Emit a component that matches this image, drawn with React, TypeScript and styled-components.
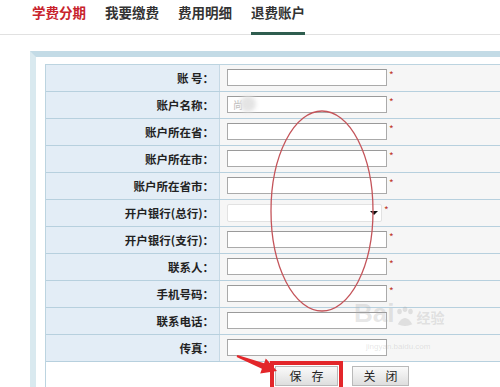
import React from 'react'
import styled, { createGlobalStyle } from 'styled-components'

const GlobalStyle = createGlobalStyle`
  html, body {
    margin: 0;
    padding: 0;
    background: #fff;
    overflow: hidden;
  }
  body {
    font-family: 'Noto Sans CJK SC', 'DejaVu Sans', sans-serif;
    width: 500px;
    height: 387px;
  }
`

const Page = styled.div`
  position: relative;
  width: 500px;
  height: 387px;
  overflow: hidden;
`

const TabBar = styled.div`
  display: flex;
  gap: 19px;
  height: 35px;
  padding-left: 32px;
  border-bottom: 1px solid #e1e1e1;
  box-sizing: border-box;
`

const Tab = styled.div<{ $active?: boolean; $highlight?: boolean }>`
  font-size: 13.5px;
  font-weight: bold;
  line-height: 24px;
  height: 35px;
  box-sizing: border-box;
  color: ${(p) => (p.$highlight ? '#c8232c' : '#333')};
  border-bottom: 3px solid ${(p) => (p.$active ? '#2f5d4f' : 'transparent')};
  margin-bottom: -1px;
`

const Panel = styled.div`
  margin: 16px 0 0 30px;
  border-top: 6px solid #c3dbe6;
  border-left: 6px solid #d9e9ef;
  padding: 7px 0 0 9px;
  background: #fff;
`

const FormTable = styled.div`
  width: 480px;
  border-top: 1px solid #bcd4e0;
  border-left: 1px solid #bcd4e0;
`

const Row = styled.div`
  display: grid;
  grid-template-columns: 174px 1fr;
  height: 27px;
  border-bottom: 1px solid #b7d0de;
  box-sizing: border-box;
`

const Label = styled.div`
  background: #e3edf6;
  border-right: 1px solid #c6d9e5;
  text-align: right;
  padding-right: 5px;
  font-size: 11.5px;
  font-weight: bold;
  color: #222;
  line-height: 26px;
`

const Value = styled.div`
  position: relative;
  display: flex;
  align-items: flex-start;
  background: #f6f6f6;
  padding: 4px 0 0 7px;
`

const TextBox = styled.div<{ $width?: number }>`
  width: ${(p) => p.$width ?? 160}px;
  height: 17px;
  box-sizing: border-box;
  background: #fff;
  border: 1px solid #aaa;
  border-top-color: #9a9a9a;
  font-size: 10px;
  color: #bbb;
  line-height: 15px;
  padding-left: 5px;
`

const SelectBox = styled.div`
  width: 155px;
  height: 18px;
  box-sizing: border-box;
  background: #fff;
  border: 1px solid #e2e2e2;
  border-radius: 2px;
  display: flex;
  justify-content: flex-end;
  align-items: center;
  padding-right: 3px;
`

const Caret = styled.span`
  width: 0;
  height: 0;
  border-left: 4px solid transparent;
  border-right: 4px solid transparent;
  border-top: 4px solid #111;
`

const Required = styled.span`
  color: #c0392b;
  font-size: 10px;
  line-height: 10px;
  margin-left: 2px;
  margin-top: 1px;
`

const Smudge = styled.span`
  position: absolute;
  left: 20px;
  top: 4px;
  width: 16px;
  height: 16px;
  border-radius: 50%;
  background: #e4e4e4;
  filter: blur(2px);
`

const ButtonRow = styled.div`
  display: flex;
  align-items: flex-start;
  gap: 9px;
  height: 26px;
  padding-left: 224px;
  background: #fff;
`

const Highlight = styled.div`
  border: 4px solid #e3262a;
  border-bottom: none;
  padding: 0 1px;
  height: 26px;
  box-sizing: border-box;
  display: flex;
  align-items: center;
  margin-top: -1px;
`

const Button = styled.div`
  width: 63px;
  height: 20px;
  box-sizing: border-box;
  border: 1px solid #b9b9b9;
  background: linear-gradient(#fafafa, #dedede);
  font-size: 12px;
  color: #222;
  text-align: center;
  line-height: 18px;
  letter-spacing: 10px;
  text-indent: 10px;
`

const PlainButton = styled(Button)`
  width: 57px;
  margin-top: 4px;
`

const Overlay = styled.svg`
  position: absolute;
  left: 0;
  top: 0;
  pointer-events: none;
`

const Watermark = styled.div`
  position: absolute;
  left: 354px;
  top: 298px;
  color: rgba(170, 170, 170, 0.3);
  font-family: 'Liberation Sans', sans-serif;
  font-weight: bold;
  font-size: 26px;
  line-height: 30px;
  display: flex;
  align-items: flex-end;
  gap: 1px;
  span {
    font-family: 'Noto Sans CJK SC', sans-serif;
    font-size: 14px;
    line-height: 22px;
  }
  small {
    position: absolute;
    left: 12px;
    top: 34px;
    font-size: 8px;
    font-weight: normal;
    white-space: nowrap;
  }
`

type Field = { label: string; required?: boolean; select?: boolean; value?: string }

const fields: Field[] = [
  { label: '账 号：', required: true },
  { label: '账户名称：', required: true, value: '尚' },
  { label: '账户所在省：', required: true },
  { label: '账户所在市：', required: true },
  { label: '账户所在省市：', required: true },
  { label: '开户银行(总行)：', required: true, select: true },
  { label: '开户银行(支行)：', required: true },
  { label: '联系人：', required: true },
  { label: '手机号码：', required: true },
  { label: '联系电话：' },
  { label: '传真：' },
]

const tabs = ['学费分期', '我要缴费', '费用明细', '退费账户']

export default function App() {
  return (
    <Page>
      <GlobalStyle />
      <TabBar>
        {tabs.map((t, i) => (
          <Tab key={t} $highlight={i === 0} $active={i === tabs.length - 1}>
            {t}
          </Tab>
        ))}
      </TabBar>
      <Panel>
        <FormTable>
          {fields.map((f) => (
            <Row key={f.label}>
              <Label>{f.label}</Label>
              <Value>
                {f.select ? (
                  <SelectBox>
                    <Caret />
                  </SelectBox>
                ) : (
                  <TextBox>{f.value}</TextBox>
                )}
                {f.value && <Smudge />}
                {f.required && <Required>*</Required>}
              </Value>
            </Row>
          ))}
          <ButtonRow>
            <Highlight>
              <Button>保存</Button>
            </Highlight>
            <PlainButton>关闭</PlainButton>
          </ButtonRow>
        </FormTable>
      </Panel>
      <Watermark>
        Bai
        <svg width="20" height="22" viewBox="0 0 22 24">
          <g fill="rgba(170,170,170,0.3)">
            <ellipse cx="5" cy="6" rx="2.5" ry="3" />
            <ellipse cx="11" cy="3.5" rx="2.5" ry="3" />
            <ellipse cx="17" cy="6" rx="2.5" ry="3" />
            <path d="M3 20 Q11 6 19 20 Q11 24 3 20Z" />
          </g>
        </svg>
        <span>经验</span>
        <small>jingyan.baidu.com</small>
      </Watermark>
      <Overlay width="500" height="387" viewBox="0 0 500 387">
        <ellipse cx="322" cy="211" rx="51" ry="100" fill="none" stroke="#c4545a" strokeWidth="1.3" />
        <polygon
          points="237.4,355.1 264.1,363.2 265.8,358.5 277,371 260.2,373.5 261.9,368.8 236.6,356.9"
          fill="#e3262a"
        />
      </Overlay>
    </Page>
  )
}
